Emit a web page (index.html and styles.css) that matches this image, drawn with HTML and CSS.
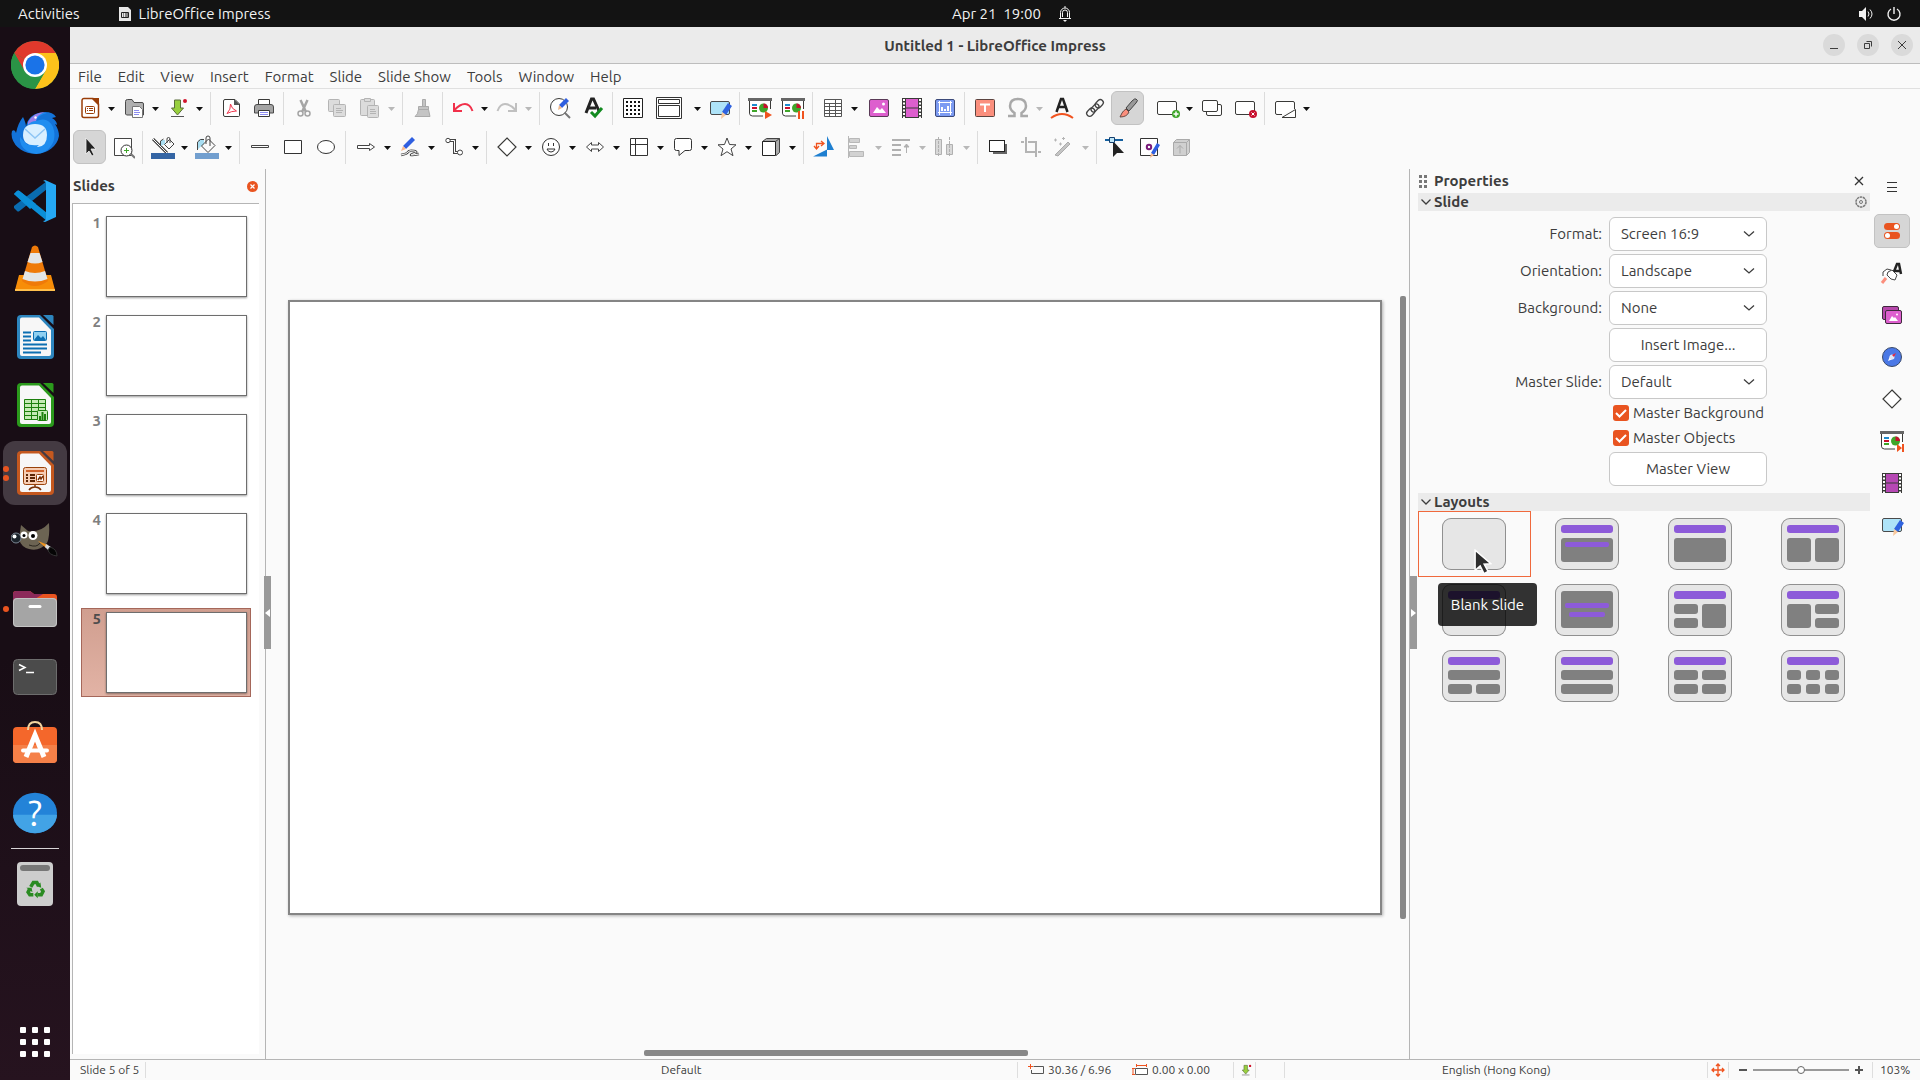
FILE: index.html
```
<!DOCTYPE html>
<html lang="en">
<head>
  <meta charset="UTF-8">
  <meta name="viewport" content="width=device-width, initial-scale=1.0">
  <title>Untitled 1 - LibreOffice Impress</title>
  <link rel="stylesheet" href="styles.css">
</head>
<body>

<!-- shared icons -->
<svg class="sprite" aria-hidden="true">
  <symbol id="caret" viewBox="0 0 7 4"><path d="M0 0h7L3.500 4z" fill="currentColor"/></symbol>
  <symbol id="chevron" viewBox="0 0 12 12"><path d="M1.500 3.500L6 8l4.500-4.500" fill="none" stroke="#3d3d3d" stroke-width="1.300"/></symbol>
  <symbol id="doc" viewBox="0 0 48 48">
    <path d="M10 2h19l14 14v26a4 4 0 0 1-4 4H10a4 4 0 0 1-4-4V6a4 4 0 0 1 4-4z" fill="currentColor"/>
    <path d="M11 4.500h17L40 17v24a2 2 0 0 1-2 2H11a2 2 0 0 1-2-2V6.500a2 2 0 0 1 2-2z" fill="#f7f7f7"/>
    <path d="M32 2h9a1.500 1.500 0 0 1 1.500 1.500V12z" fill="currentColor"/>
  </symbol>
  <symbol id="diamond" viewBox="0 0 24 24"><path d="M12 3l9 9-9 9-9-9z" fill="#fff" stroke="#3a3a38" stroke-width="1.200"/></symbol>
  <symbol id="show" viewBox="0 0 24 24">
    <path d="M1.500 5v12a3 3 0 0 0 3 3H15M22.500 5v8" fill="#fff" stroke="#3a3a38"/>
    <path d="M2 5h20v14H4.500A2.500 2.500 0 0 1 2 16z" fill="#fff"/>
    <path d="M0 2h24v3H0z" fill="#666"/>
    <path d="M4 8h5v2H4z" fill="#1e8bcd"/><path d="M4 11h5v2H4z" fill="#c8102e"/><path d="M4 14h5v2H4z" fill="#3fa62a"/>
    <circle cx="15.500" cy="12" r="4.500" fill="#3fa62a"/><path d="M15.500 12V7.500a4.500 4.500 0 0 1 4.500 4.500z" fill="#c8102e"/>
  </symbol>
  <symbol id="film" viewBox="0 0 24 24">
    <path d="M2 2h20v20H2z" fill="#3a3a38"/><path d="M6 3h12v8.500H6zM6 12.500h12V21H6z" fill="currentColor"/>
    <path d="M4 3v19M20 3v19" stroke="#fff" stroke-width="2" stroke-dasharray="2 1.500"/>
  </symbol>
  <symbol id="master-icon" viewBox="0 0 24 24">
    <rect x="2.500" y="5.500" width="19" height="13" rx="1.500" fill="#aee3f8" stroke="#4a4a4a"/>
    <path d="M20 7l4 3-6 9-4-3z" fill="#3063df"/><path d="M14 16l4 3-5 4z" fill="#f9c99d"/>
  </symbol>
  <symbol id="pic" viewBox="0 0 24 24">
    <rect x="2.500" y="3.500" width="19" height="17" rx="1.500" fill="#dd5fce" stroke="#5a3a57"/>
    <path d="M6 17l4-6 3 3 2-2 4 5z" fill="#fff"/><circle cx="16.500" cy="8" r="1.500" fill="#fff"/>
  </symbol>
  <symbol id="save" viewBox="0 0 24 24">
    <path d="M8.500 4h6v8h3L11.500 19l-6-7h3z" fill="#97cf3d" stroke="#5a6d3a"/><path d="M5 20.500h13" stroke="#555"/><circle cx="19" cy="5" r="2" fill="#d0142c"/>
  </symbol>
  <symbol id="pointer" viewBox="0 0 16 24">
    <path d="M1 1v18l4.500-4 3.500 7 3.500-2-3.500-6.500 6-.5z" fill="#2e2e2e" stroke="#fff" stroke-width="1.300"/>
  </symbol>
</svg>

<div class="desktop">

  <header class="topbar">
    <div class="topbar-left">
      <button class="activities">Activities</button>
      <button class="app-menu">
        <svg width="14" height="16" viewBox="0 0 14 16"><path d="M1 1h9l3 3v11H1z" fill="#e8e8e8"/><path d="M3.500 6.500h7v5h-7z" fill="none" stroke="#222"/><path d="M5 8h1M7 8h3M5 10h1M7 10h3" stroke="#222"/></svg>
        LibreOffice Impress
      </button>
    </div>
    <button class="clock">Apr 21&nbsp; 19:00
      <svg width="14" height="16" viewBox="0 0 14 16" fill="none" stroke="#f2f2f2"><path d="M1 12.500h12M2.500 12V6.500a4.500 4.500 0 0 1 9 0V12M4.500 11V6.500a2.500 2.500 0 0 1 5 0V11M7 0v2"/><path d="M5 14h4l-2 2z" fill="#f2f2f2" stroke="none"/></svg>
    </button>
    <button class="system" aria-label="System">
      <svg width="16" height="16" viewBox="0 0 16 16"><path d="M1 5h3l4-4v14l-4-4H1z" fill="#f2f2f2"/><path d="M10 5.500q2 2.500 0 5M12 3.500q4 4.500 0 9" fill="none" stroke="#f2f2f2"/></svg>
      <svg width="16" height="16" viewBox="0 0 16 16" fill="none" stroke="#f2f2f2" stroke-width="1.400"><path d="M8 1v7M5 3a6 6 0 1 0 6 0"/></svg>
    </button>
  </header>

  <nav class="dock" aria-label="Dock">
    <button aria-label="Google Chrome"><svg viewBox="0 0 48 48">
      <circle cx="24" cy="24" r="24" fill="#2a9446"/><path d="M24 24L3.200 12a24 24 0 0 1 41.600 0z" fill="#e0392c"/><path d="M24 24l10.400 6L24 48a24 24 0 0 0 20.800-36H24z" fill="#fcc21b"/><path d="M3.200 12L13.600 30 24 24z" fill="#e0392c"/><path d="M3.200 12a24 24 0 0 0 0 24A24 24 0 0 0 24 48l10.400-18A12 12 0 0 1 13.600 30z" fill="#2a9446"/><circle cx="24" cy="24" r="12" fill="#fff"/><circle cx="24" cy="24" r="9.600" fill="#1a73e8"/></svg></button>
    <button aria-label="Thunderbird"><svg viewBox="0 0 48 48">
      <g transform="translate(0 2)"><path d="M1 20q3-2 4 2Q7 12 12 6q3 6 3 10Q17 2 34 1q8 0 11 5l-4 1q5 3 5 7l-2-1q4 6 4 12a24 21 0 0 1-47 2Q0 23 1 20z" fill="#1373d9"/><path d="M17 11Q23 1 36 2q-9 2-11 8 12-5 17 6 5 15-7 24-10 6-19 0Q8 35 9 26q5 6 8 8z" fill="#1f8df0"/><path d="M17 11Q23 1 34 1q-9 3-9 9-5 0-8 4z" fill="#9d7fe8"/><circle cx="24.500" cy="6.500" r="1.200" fill="#fff"/><path d="M12 24q0-11 12-11t12 11-9 12q-2 0 1-2-16 2-16-10z" fill="#d9efff"/><path d="M14 18l10 9 10-9" fill="none" stroke="#8ec5f4" stroke-width="1.500"/></g></svg></button>
    <button aria-label="Visual Studio Code"><svg viewBox="0 0 48 48">
      <path d="M3 17l3-3q1-1 2.500 0L36 36v8z" fill="#0b8fd8"/><path d="M3 31l3 3q1 1 2.500 0L36 12V4L3 29z" fill="#0a6cb0"/><path d="M3 17l3-3q1-1 2.500 0L25 27l-6 5z" fill="#0b8fd8"/><path d="M34 3l11 5v32l-11 5q-1 0-2-1 3 0 3-3V7q0-3-3-3z" fill="#25a8f4"/></svg></button>
    <button aria-label="VLC"><svg viewBox="0 0 48 48">
      <path d="M8 30h32l4 15H4z" fill="#f78d08"/><path d="M4 44h40v2H4z" fill="#ffc04d"/><path d="M21 2q3-3 6 0l10 34q-13 10-26 0z" fill="#ef7a09"/><path d="M19.500 8h9l3 9q-7.500 3-15 0zM14 26q10 4 20 0l2.500 8q-12.500 5-25 0z" fill="#e3e5e6"/></svg></button>
    <button aria-label="LibreOffice Writer" class="c-writer"><svg viewBox="0 0 48 48"><use href="#doc"/>
      <path d="M12 19.500h8M12 23.500h8M12 27.500h8M12 31.500h24M12 35.500h24M12 39.500h18" stroke="#0c6fb2" stroke-width="2"/><rect x="22.500" y="18.500" width="13" height="9" rx="1" fill="#8fd0f1" stroke="#0c6fb2"/><path d="M23 27l4-5 3 3 2-2 3 4z" fill="#0c6fb2"/></svg></button>
    <button aria-label="LibreOffice Calc" class="c-calc"><svg viewBox="0 0 48 48"><use href="#doc"/>
      <path d="M13.500 18.500h21v20h-21zM13.500 22.500h21M13.500 26.500h21M13.500 30.500h21M13.500 34.500h21M20.500 18.500v20M27.500 18.500v20" fill="#c5eab5" stroke="#1c7f0c"/><rect x="26.500" y="29.500" width="10" height="10" rx="1" fill="#c5eab5" stroke="#1c7f0c"/><path d="M29 39v-4M31.500 39v-8M34 39v-6" stroke="#1c7f0c" stroke-width="2"/></svg></button>
    <button aria-label="LibreOffice Impress" class="c-impress active two"><svg viewBox="0 0 48 48"><use href="#doc"/>
      <rect x="12.500" y="18.500" width="23" height="17" rx="2" fill="#f6cdb3" stroke="#99420b"/><path d="M15 22h18" stroke="#d0622a" stroke-width="2"/><path d="M15 26h2M15 29h2M15 32h2M19 26h5M19 29h5M19 32h5" stroke="#5c2606" stroke-width="2"/><rect x="25.500" y="25.500" width="7" height="7" rx="1" fill="#fff" stroke="#99420b"/><path d="M27 31l2-3 1 2 2-3M24 36v2M18 41q2-3 6-3t6 3" fill="none" stroke="#7a3005" stroke-width="1.500"/></svg></button>
    <button aria-label="GIMP"><svg viewBox="0 0 48 48">
      <path d="M10 8l7 6q12 2 21-8 1 14-2 20-8 9-18 6Q10 30 8 22z" fill="#6c6453"/><circle cx="5" cy="21" r="5" fill="#1b222a" stroke="#7b8794"/><circle cx="3.500" cy="19.500" r="2" fill="#fff"/><circle cx="13" cy="18" r="3.500" fill="#fff"/><circle cx="22" cy="18.500" r="4.500" fill="#fff"/><circle cx="13" cy="18.500" r="1.500"/><circle cx="22" cy="19" r="2"/><path d="M18 28q8 3 11-2" stroke="#2a261f" fill="none"/><path d="M27 24l10 4-2 3z" fill="#ef9320"/><path d="M35 27l5 3-2 4-4-4z" fill="#d8dade"/><path d="M39 30q7 2 7 9-8-1-9-6z" fill="#050505" stroke="#333"/></svg></button>
    <button aria-label="Files" class="one"><svg viewBox="0 0 48 48">
      <g transform="translate(0 3)"><path d="M2 6a3 3 0 0 1 3-3h14l4 3h20a3 3 0 0 1 3 3v10H2z" fill="#e95420"/><path d="M2 6a3 3 0 0 1 3-3h14l4 3h9L16 16H2z" fill="#8c2a5a"/><rect x="2" y="10" width="44" height="29" rx="4" fill="#a5a5a5"/><rect x="2.500" y="10.500" width="43" height="28" rx="3.500" fill="none" stroke="#c4c4c4"/><path d="M19 18.500h10" stroke="#fff" stroke-width="3" stroke-linecap="round"/></g></svg></button>
    <button aria-label="Terminal"><svg viewBox="0 0 48 48">
      <rect x="2.500" y="6.500" width="43" height="35" rx="4" fill="#4b4b4b" stroke="#6d6d6d"/><path d="M8 11.500l6 3-6 3M15 19.500h8" fill="none" stroke="#fff" stroke-width="1.500"/></svg></button>
    <button aria-label="Ubuntu Software"><svg viewBox="0 0 48 48">
      <rect x="2" y="6" width="44" height="36" rx="4" fill="#f4672b"/><path d="M2 24h44v14a4 4 0 0 1-4 4H6a4 4 0 0 1-4-4z" fill="#f58048"/><path d="M17 9q0-8 7-8t7 8" fill="none" stroke="#f3d5a0" stroke-width="2"/><path d="M15 36l9-22 9 22" fill="none" stroke="#fff" stroke-width="5"/><path d="M12 29.500h24" stroke="#fff" stroke-width="4" stroke-linecap="round"/></svg></button>
    <button aria-label="Help" class="help"><svg viewBox="0 0 48 48"><ellipse cx="24" cy="24" rx="24" ry="22" fill="#2383d8"/><path d="M0 26h48a24 20 0 0 1-48 0z" fill="#42a3e6"/></svg><span>?</span></button>
    <hr>
    <button aria-label="Trash"><svg viewBox="0 0 48 48">
      <rect x="6" y="2" width="36" height="44" rx="4" fill="#cdcdcd"/><rect x="9" y="5" width="30" height="6" rx="3" fill="#777"/><g transform="translate(3 4) scale(.88)"><g fill="none" stroke="#2a8b22" stroke-width="4"><path d="M19 26l3-5h4l2 4M31 28l2 3-2 4h-4M22 35h-4l-2-3 2-4"/></g><path d="M30 21l1 6-6-2zM27 31v8l-4-4zM14 27l6 0 1 5z" fill="#2a8b22"/></g></svg></button>
    <button aria-label="Show Applications" class="apps"><i></i><i></i><i></i><i></i><i></i><i></i><i></i><i></i><i></i></button>
  </nav>

  <main class="window">
    <div class="titlebar">
      <h1>Untitled 1 - LibreOffice Impress</h1>
      <div class="win-buttons">
        <button aria-label="Minimize"><svg viewBox="0 0 22 22"><path d="M7 14.500h8"/></svg></button>
        <button aria-label="Restore"><svg viewBox="0 0 22 22"><path d="M7.500 9.500h5v5h-5zM9.500 7.500h5v5"/></svg></button>
        <button aria-label="Close"><svg viewBox="0 0 22 22"><path d="M7 7l8 8M15 7l-8 8"/></svg></button>
      </div>
    </div>

    <nav class="menubar">
      <button>File</button><button>Edit</button><button>View</button><button>Insert</button><button>Format</button><button>Slide</button><button>Slide Show</button><button>Tools</button><button>Window</button><button>Help</button>
    </nav>

    <div class="toolbars">
    <!-- standard toolbar -->
    <div class="toolbar">
      <button class="tb" aria-label="New"><svg viewBox="0 0 24 24"><path d="M6 2.500h9l5.500 5.500v11.500a2 2 0 0 1-2 2H6a2 2 0 0 1-2-2v-15a2 2 0 0 1 2-2z" fill="#fff" stroke="#9a3e08" stroke-width="1.500"/><path d="M13 2h8v8z" fill="#9a3e08"/><rect x="7.500" y="10.500" width="9" height="7" rx="1" fill="none" stroke="#9a3e08"/><path d="M9 12.500h1M11 12.500h4M9 14.500h1M11 14.500h4" stroke="#9a3e08"/></svg></button>
      <button class="arrow" aria-label="New options"><svg><use href="#caret"/></svg></button>
      <button class="tb" aria-label="Open"><svg viewBox="0 0 24 24"><path d="M3.500 18V5.500a2 2 0 0 1 2-2H10l2 3h8a1.500 1.500 0 0 1 1.500 1.500V19h-17z" fill="#b0b0b0" stroke="#4a4a4a"/><path d="M10.500 10.500h7l3 3v8h-10z" fill="#fff" stroke="#777"/><path d="M12 14.500h5M12 16.500h6M12 18.500h5" stroke="#8d8df0"/></svg></button>
      <button class="arrow" aria-label="Open options"><svg><use href="#caret"/></svg></button>
      <button class="tb" aria-label="Save"><svg><use href="#save"/></svg></button>
      <button class="arrow" aria-label="Save options"><svg><use href="#caret"/></svg></button>
      <span class="sep"></span>
      <button class="tb" aria-label="Export as PDF"><svg viewBox="0 0 24 24"><path d="M6 3.500h10l4.500 4.500v11.500a1 1 0 0 1-1 1H6a1.500 1.500 0 0 1-1.500-1.500V5A1.500 1.500 0 0 1 6 3.500z" fill="#fff" stroke="#3a3a38"/><path d="M15 3l6 6h-6z" fill="#555"/><path d="M11.500 8q1 5 6 7-5 0-9.500 2.500 4-4 3.500-9.500z" fill="none" stroke="#f0384f"/></svg></button>
      <button class="tb" aria-label="Print"><svg viewBox="0 0 24 24"><path d="M6.500 8V3.500h11V8" fill="#fff" stroke="#3a3a38"/><path d="M5 8.500h14a2.500 2.500 0 0 1 2.500 2.500v6h-19v-6A2.500 2.500 0 0 1 5 8.500z" fill="#a4a4a4" stroke="#4a4a4a"/><path d="M6.500 14.500h11v6h-11z" fill="#fff" stroke="#3a3a38"/><path d="M8 16.500h8M8 18.500h8" stroke="#8d8df0"/></svg></button>
      <span class="sep"></span>
      <button class="tb" aria-label="Cut" disabled><svg viewBox="0 0 24 24" fill="none" stroke="#a5a5a5" stroke-width="1.500"><path d="M8.500 4l5.500 12M15.500 4L10 16" stroke-width="2.500"/><circle cx="8.500" cy="17.500" r="2.500"/><circle cx="15.500" cy="17.500" r="2.500"/></svg></button>
      <button class="tb" aria-label="Copy" disabled><svg viewBox="0 0 24 24" fill="#dcdcdc" stroke="#b4b4b4"><rect x="3.500" y="3.500" width="11" height="12" rx="1"/><rect x="8.500" y="8.500" width="12" height="12" rx="1"/><path d="M11 12.500h5M11 14.500h7M11 16.500h6"/></svg></button>
      <button class="tb" aria-label="Paste" disabled><svg viewBox="0 0 24 24" fill="#dcdcdc" stroke="#b4b4b4"><rect x="2.500" y="3.500" width="14" height="16" rx="1"/><path d="M6.500 2.500h6v3h-6z"/><rect x="9.500" y="9.500" width="11" height="12" rx="1"/><path d="M12 13.500h5M12 15.500h6M12 17.500h6"/></svg></button>
      <button class="arrow" aria-label="Paste options" disabled><svg><use href="#caret"/></svg></button>
      <span class="sep"></span>
      <button class="tb" aria-label="Clone Formatting" disabled><svg viewBox="0 0 24 24" fill="#c4c4c4" stroke="#aaa"><path d="M11.500 3.500h3v7h-3zM7.500 10.500h10v3h-10zM7.500 13.500h10l1.500 7H4q3-2 3.500-7z"/></svg></button>
      <span class="sep"></span>
      <button class="tb" aria-label="Undo"><svg viewBox="0 0 24 24" fill="none" stroke="#f1304a" stroke-width="2"><path d="M3 7v8h8M3.500 14Q9 8 14 8t7.500 7"/></svg></button>
      <button class="arrow" aria-label="Undo options"><svg><use href="#caret"/></svg></button>
      <button class="tb" aria-label="Redo" disabled><svg viewBox="0 0 24 24" fill="none" stroke="#c0c0c0" stroke-width="2"><path d="M21 7v8h-8M20.500 14Q15 8 10 8t-7.500 7"/></svg></button>
      <button class="arrow" aria-label="Redo options" disabled><svg><use href="#caret"/></svg></button>
      <span class="sep"></span>
      <button class="tb" aria-label="Find and Replace"><svg viewBox="0 0 24 24"><circle cx="11" cy="11" r="8.500" fill="#fff" stroke="#3a3a38"/><path d="M16.500 16.500L22 22" stroke="#777" stroke-width="2"/><path d="M18 2l3 3-7 7-3-3z" fill="#2f5fe0"/><path d="M11 9l3 3-4 2z" fill="#f0b98d"/></svg></button>
      <button class="tb" aria-label="Spelling"><svg viewBox="0 0 24 24"><path d="M5 17L10.500 3h2L18 15M7 12h8" fill="none" stroke="#222" stroke-width="3"/><path d="M10 16l4 4 7-8" fill="none" stroke="#118a1f" stroke-width="3"/></svg></button>
      <span class="sep"></span>
      <button class="tb" aria-label="Display Grid"><svg viewBox="0 0 24 24"><path d="M2.500 2.500h19v19h-19z" fill="#fff" stroke="#222"/><path d="M5 6h15M5 10h15M5 14h15M5 18h15" stroke="#111" stroke-width="2" stroke-dasharray="2 2"/></svg></button>
      <button class="tb wide" aria-label="Display Views"><svg viewBox="0 0 28 24" fill="#fff" stroke="#333"><path d="M1.500 1.500h25v21h-25zM3.500 3.500h21v4h-21zM3.500 9.500h21v11h-21z"/></svg></button>
      <button class="arrow" aria-label="Display Views options"><svg><use href="#caret"/></svg></button>
      <button class="tb" aria-label="Master Slide"><svg><use href="#master-icon"/></svg></button>
      <span class="sep"></span>
      <button class="tb" aria-label="Start from First Slide"><svg viewBox="0 0 24 24"><use href="#show"/><path d="M17 15l7 4-7 4z" fill="#f0531f"/></svg></button>
      <button class="tb" aria-label="Start from Current Slide"><svg viewBox="0 0 24 24"><use href="#show"/><path d="M17 15h2v8h-2zM21 15h2v8h-2z" fill="#f0531f"/></svg></button>
      <span class="sep"></span>
      <button class="tb" aria-label="Table"><svg viewBox="0 0 24 24"><path d="M3.500 3.500h17v17h-17zM3.500 7.500h17M3.500 10.500h17M3.500 14.500h17M3.500 17.500h17M8.500 7v13M14.500 3v17" fill="#fff" stroke="#555"/></svg></button>
      <button class="arrow" aria-label="Table options"><svg><use href="#caret"/></svg></button>
      <span class="gap"></span>
      <button class="tb" aria-label="Insert Image"><svg><use href="#pic"/></svg></button>
      <button class="tb c-film" aria-label="Insert Media"><svg><use href="#film"/></svg></button>
      <button class="tb" aria-label="Insert Chart"><svg viewBox="0 0 24 24"><rect x="2.500" y="3.500" width="19" height="17" rx="1.500" fill="#7c9bf2" stroke="#3c4a7a"/><path d="M6.500 5v14M5 16.500h14M17.500 5v14M5 6.500h14" stroke="#fff"/><path d="M8 15v-4h2v4zM11 15v-2h2v2zM14 15v-5h2v5z" fill="#fff"/></svg></button>
      <span class="sep"></span>
      <button class="tb" aria-label="Insert Text Box"><svg viewBox="0 0 24 24"><rect x="2.500" y="3.500" width="19" height="17" rx="1" fill="#fb8f7d" stroke="#5c4440"/><path d="M7 8.500h10M12 8v8" stroke="#fff" stroke-width="2"/></svg></button>
      <button class="tb" aria-label="Special Character" disabled><svg viewBox="0 0 24 24"><path d="M2 20h6.500v-3Q4 14 4 10q0-7 8-7t8 7q0 4-4.500 7v3H22" fill="none" stroke="#a9a9a9" stroke-width="2.500"/></svg></button>
      <button class="arrow" aria-label="Special Character options" disabled><svg><use href="#caret"/></svg></button>
      <button class="tb" aria-label="Fontwork"><svg viewBox="0 0 24 24"><path d="M6.500 16L11 3h2l4.500 13M8 11h8" fill="none" stroke="#222" stroke-width="2.500"/><path d="M1 22q11-8 22 0" fill="none" stroke="#f0531f" stroke-width="2"/></svg></button>
      <button class="tb" aria-label="Hyperlink"><svg viewBox="0 0 24 24" fill="none" stroke="#444" stroke-width="1.300"><g transform="rotate(-45 12 12)"><rect x="1.500" y="9" width="9" height="6" rx="3"/><rect x="13.500" y="9" width="9" height="6" rx="3"/><rect x="7.500" y="9.500" width="9" height="5" rx="2.500"/></g></svg></button>
      <button class="tb pressed" aria-label="Show Draw Functions"><svg viewBox="0 0 24 24"><path d="M20 3q3 1 0 4l-7 8-3-3 6-7q3-3 4-2z" fill="#999" stroke="#444"/><path d="M10 13l3 3q-2 5-9 5 1-2 2-4t4-4z" fill="#fb8f7d" stroke="#6a4a44"/></svg></button>
      <span class="sep blank"></span>
      <button class="tb" aria-label="New Slide"><svg viewBox="0 0 24 24"><rect x="1.500" y="5.500" width="19" height="13" rx="1.500" fill="#fff" stroke="#3a3a38"/><circle cx="20" cy="18" r="4" fill="#3fa62a"/><path d="M17.500 18h5M20 15.500v5" stroke="#fff" stroke-width="1.500"/></svg></button>
      <button class="arrow" aria-label="New Slide options"><svg><use href="#caret"/></svg></button>
      <button class="tb" aria-label="Duplicate Slide"><svg viewBox="0 0 24 24" fill="#fff" stroke="#3a3a38"><rect x="6.500" y="8.500" width="15" height="11" rx="1.500"/><rect x="2.500" y="4.500" width="15" height="11" rx="1.500"/></svg></button>
      <button class="tb" aria-label="Delete Slide"><svg viewBox="0 0 24 24"><rect x="2.500" y="5.500" width="19" height="13" rx="1.500" fill="#fff" stroke="#3a3a38"/><circle cx="20" cy="18" r="4" fill="#c8102e"/><path d="M18.500 16.500l3 3M21.500 16.500l-3 3" stroke="#fff"/></svg></button>
      <span class="sep"></span>
      <button class="tb" aria-label="Slide Layout"><svg viewBox="0 0 24 24"><path d="M21.500 13V7a1.500 1.500 0 0 0-1.500-1.500H4A1.500 1.500 0 0 0 2.500 7v10A1.500 1.500 0 0 0 4 18.500h5M9 21.500l13.500-8v8z" fill="#fff" stroke="#3a3a38"/></svg></button>
      <button class="arrow" aria-label="Slide Layout options"><svg><use href="#caret"/></svg></button>
    </div>

    <!-- drawing toolbar -->
    <div class="toolbar">
      <button class="tb pressed" aria-label="Select"><svg viewBox="0 0 24 24"><path d="M8 3v16l3-3 3 5 2-1-3-6h5z" fill="#222" stroke="#f2f2f2" stroke-width=".8"/></svg></button>
      <button class="tb" aria-label="Zoom and Pan"><svg viewBox="0 0 24 24"><path d="M3.500 3.500h17v17h-17z" fill="#fff" stroke="#444"/><circle cx="15.500" cy="15.500" r="5.500" fill="#fff" stroke="#333"/><path d="M20 19l4 4" stroke="#777" stroke-width="2"/><path d="M13 15.500h5M15.500 13v5" stroke="#3fa62a"/></svg></button>
      <span class="sep"></span>
      <button class="tb" aria-label="Line Color"><svg viewBox="0 0 24 24"><path d="M2 4l14 14" stroke="#444" stroke-width="3"/><path d="M2 4l14 14" stroke="#fff"/><path d="M10 11V5h4v4z" fill="#a8def2"/><path d="M13.500 9.500l5-5 4.500 4.500-5 5zM16 8V4a1.500 1.500 0 0 1 3 0v4M9.500 11V6l3-2" fill="none" stroke="#444"/><path d="M0 18h24v6H0z" fill="#3465a4"/></svg></button>
      <button class="arrow" aria-label="Line Color options"><svg><use href="#caret"/></svg></button>
      <button class="tb" aria-label="Fill Color"><svg viewBox="0 0 24 24"><path d="M3 14V7q1-4 6-3v5z" fill="#a8def2"/><path d="M6.500 11l7-7 6.500 6.500-7 7zM11 9V3a2 2 0 0 1 4 0v8M2.500 15V7l3-2.500H9" fill="none" stroke="#444"/><path d="M0 18h24v6H0z" fill="#729fcf"/></svg></button>
      <button class="arrow" aria-label="Fill Color options"><svg><use href="#caret"/></svg></button>
      <span class="sep"></span>
      <button class="tb" aria-label="Line"><svg viewBox="0 0 24 24"><path d="M3.500 10.500h17v2h-17z" fill="#fff" stroke="#444"/></svg></button>
      <button class="tb" aria-label="Rectangle"><svg viewBox="0 0 24 24"><path d="M3.500 5.500h17v13h-17z" fill="#fff" stroke="#333"/></svg></button>
      <button class="tb" aria-label="Ellipse"><svg viewBox="0 0 24 24"><ellipse cx="12" cy="12" rx="8.500" ry="6.500" fill="#fff" stroke="#333"/></svg></button>
      <span class="sep"></span>
      <button class="tb" aria-label="Lines and Arrows"><svg viewBox="0 0 24 24"><path d="M3.500 10.500h12v-2l5 3.500-5 3.500v-2h-12z" fill="#fff" stroke="#444"/></svg></button>
      <button class="arrow" aria-label="Lines and Arrows options"><svg><use href="#caret"/></svg></button>
      <button class="tb" aria-label="Curves and Polygons"><svg viewBox="0 0 24 24"><path d="M3 20q6-1 7-3t6-1-1 3 6 0" fill="none" stroke="#444" stroke-width="2.500"/><path d="M3 20q6-1 7-3t6-1-1 3 6 0" fill="none" stroke="#fff"/><path d="M14 2l3 3-9 9-3-3z" fill="#2f5fe0"/><path d="M5 11l3 3-5 2z" fill="#f9b98d"/></svg></button>
      <button class="arrow" aria-label="Curves options"><svg><use href="#caret"/></svg></button>
      <button class="tb" aria-label="Connectors"><svg viewBox="0 0 24 24" fill="#fff" stroke="#444"><path d="M7 5.500h5.500v12H17" fill="none" stroke-width="3"/><path d="M7 5.500h5.500v12H17" fill="none" stroke="#fff"/><circle cx="6" cy="5.500" r="2.200"/><circle cx="18" cy="17.500" r="2.500"/></svg></button>
      <button class="arrow" aria-label="Connectors options"><svg><use href="#caret"/></svg></button>
      <span class="sep"></span>
      <button class="tb" aria-label="Basic Shapes"><svg><use href="#diamond"/></svg></button>
      <button class="arrow" aria-label="Basic Shapes options"><svg><use href="#caret"/></svg></button>
      <button class="tb" aria-label="Symbol Shapes"><svg viewBox="0 0 24 24" fill="#fff" stroke="#333"><circle cx="12" cy="12" r="8.500"/><path d="M8 14h8q-1 3-4 3t-4-3z"/><path d="M9.500 8v3M14.500 8v3"/></svg></button>
      <button class="arrow" aria-label="Symbol Shapes options"><svg><use href="#caret"/></svg></button>
      <button class="tb" aria-label="Block Arrows"><svg viewBox="0 0 24 24"><path d="M3.500 12l5-4.500v2.500h7V7.500l5 4.500-5 4.500V14h-7v2.500z" fill="#fff" stroke="#444"/></svg></button>
      <button class="arrow" aria-label="Block Arrows options"><svg><use href="#caret"/></svg></button>
      <button class="tb" aria-label="Flowchart"><svg viewBox="0 0 24 24"><path d="M3.500 3.500h17v17h-17zM3.500 9.500h17M8.500 3v17" fill="#fff" stroke="#333"/></svg></button>
      <button class="arrow" aria-label="Flowchart options"><svg><use href="#caret"/></svg></button>
      <button class="tb" aria-label="Callout Shapes"><svg viewBox="0 0 24 24"><path d="M5.500 3.500h13a2 2 0 0 1 2 2v8a2 2 0 0 1-2 2H14l-6 5v-5H5.500a2 2 0 0 1-2-2v-8a2 2 0 0 1 2-2z" fill="#fff" stroke="#333"/></svg></button>
      <button class="arrow" aria-label="Callout options"><svg><use href="#caret"/></svg></button>
      <button class="tb" aria-label="Stars and Banners"><svg viewBox="0 0 24 24"><path d="M12 3l2.500 6.500 6.500.3-5 4.200 2 6.700-6-4-6 4 2-6.700-5-4.200 6.500-.3z" fill="#fff" stroke="#444"/></svg></button>
      <button class="arrow" aria-label="Stars options"><svg><use href="#caret"/></svg></button>
      <button class="tb" aria-label="3D Objects"><svg viewBox="0 0 24 24"><path d="M3.500 6.500l4-3h13v14l-3.500 3z" fill="#aaa" stroke="#444"/><path d="M3.500 6.500h13v14h-13z" fill="#fff" stroke="#222"/><path d="M16.500 6.500l4-3" stroke="#444"/></svg></button>
      <button class="arrow" aria-label="3D Objects options"><svg><use href="#caret"/></svg></button>
      <span class="sep"></span>
      <button class="tb" aria-label="Rotate"><svg viewBox="0 0 24 24"><path d="M15 1v14h7zM1 21.500h14v-7z" fill="#1e7fd0"/><path d="M4.500 13V8.500H11M9 6l3 2.500-3 2.500M2 11l2.500 3L7 11" fill="none" stroke="#f0531f" stroke-width="1.300"/></svg></button>
      <button class="tb" aria-label="Align Objects" disabled><svg viewBox="0 0 24 24" fill="#d2d2d2" stroke="#b8b8b8"><path d="M3.500 1v22M4.500 3.500h10v4h-10zM4.500 10.500h7v3h-7zM4.500 16.500h14v5h-14z"/></svg></button>
      <button class="arrow" aria-label="Align options" disabled><svg><use href="#caret"/></svg></button>
      <button class="tb" aria-label="Arrange" disabled><svg viewBox="0 0 24 24" stroke="#b0b0b0" fill="#b0b0b0" stroke-width="2"><path d="M3 5h18M3 10h9M3 15h9M3 20h9"/><path d="M17.500 9v9M15 12l2.500-3 2.500 3z" stroke-width="1"/></svg></button>
      <button class="arrow" aria-label="Arrange options" disabled><svg><use href="#caret"/></svg></button>
      <button class="tb" aria-label="Distribute" disabled><svg viewBox="0 0 24 24" fill="#d8d8d8" stroke="#b0b0b0"><path d="M2.500 4.500h6v15h-6zM13.500 9.500h6v10h-6z"/><path d="M5.500 2v20M16.500 2v20" stroke-dasharray="3 1"/></svg></button>
      <button class="arrow" aria-label="Distribute options" disabled><svg><use href="#caret"/></svg></button>
      <span class="sep"></span>
      <button class="tb" aria-label="Shadow"><svg viewBox="0 0 24 24"><path d="M7 9h14v10H7z" fill="#666"/><rect x="3.500" y="5.500" width="15" height="11" fill="#fff" stroke="#222"/></svg></button>
      <button class="tb" aria-label="Crop Image" disabled><svg viewBox="0 0 24 24" fill="none" stroke="#b4b4b4" stroke-width="2"><path d="M7 2v15h10M9 7h8v15M2 7h3M19 17h3"/></svg></button>
      <button class="tb" aria-label="Filter" disabled><svg viewBox="0 0 24 24"><path d="M3 20L16 7l2 2L6 21z" fill="#c4c4c4" stroke="#aaa"/><path d="M2 5h3M3.500 3.500v3M7 9h3M8.500 7.500v3M10 3.500h3M11.500 2v3" stroke="#b4b4b4"/></svg></button>
      <button class="arrow" aria-label="Filter options" disabled><svg><use href="#caret"/></svg></button>
      <span class="sep"></span>
      <button class="tb" aria-label="Points"><svg viewBox="0 0 24 24"><path d="M0 5h18" stroke="#15609f" stroke-width="2"/><path d="M8 6v16l4-4h7z" fill="#222"/><path d="M4.500 2.500h5v5h-5z" fill="#bfe6f7" stroke="#15406f"/></svg></button>
      <button class="tb" aria-label="Glue Points"><svg viewBox="0 0 24 24"><path d="M2.500 3.500h17v17h-17z" fill="#fff" stroke="#333"/><circle cx="11" cy="12" r="2.200" fill="none" stroke="#7b1b7b" stroke-width="2"/><path d="M19 8l3 2-6 10-3-2z" fill="#2f5fe0"/><path d="M13 18l3 2-4 3z" fill="#f9b98d"/></svg></button>
      <button class="tb" aria-label="Toggle Extrusion" disabled><svg viewBox="0 0 24 24" fill="#d0d0d0" stroke="#aaa"><path d="M2.500 7.500l3-3h13v13l-3 3h-13zM2.500 7.500h13v13M15.500 7.500l3-3"/><path d="M9 18.500v-8M6 13.500l3-3 3 3" fill="none"/></svg></button>
    </div>
    </div>

    <div class="work">
      <aside class="slides-panel">
        <div class="panel-head">
          <h2>Slides</h2>
          <button aria-label="Close slide pane"><svg viewBox="0 0 11 11"><circle cx="5.500" cy="5.500" r="5.500" fill="#e95420"/><path d="M3.500 3.500l4 4M7.500 3.500l-4 4" stroke="#fff" stroke-width="1.200"/></svg></button>
        </div>
        <ol class="slide-list">
          <li><span>1</span><button aria-label="Slide 1"></button></li>
          <li><span>2</span><button aria-label="Slide 2"></button></li>
          <li><span>3</span><button aria-label="Slide 3"></button></li>
          <li><span>4</span><button aria-label="Slide 4"></button></li>
          <li class="current"><span>5</span><button aria-label="Slide 5"></button></li>
        </ol>
        <button class="handle" aria-label="Hide slide pane"><svg viewBox="0 0 5 8"><path d="M5 0v8L0 4z" fill="#fff"/></svg></button>
      </aside>

      <section class="editor">
        <div class="stage"><div class="slide"></div></div>
        <div class="scroll-y"><div></div></div>
        <div class="scroll-x"><div></div></div>
      </section>

      <aside class="sidebar">
        <button class="handle" aria-label="Hide sidebar"><svg viewBox="0 0 5 8"><path d="M0 0v8l5-4z" fill="#fff"/></svg></button>
        <div class="deck">
          <div class="deck-head">
            <svg class="grip" viewBox="0 0 8 13" fill="#777"><path d="M0 0h3v3H0zM5 0h3v3H5zM0 5h3v3H0zM5 5h3v3H5zM0 10h3v3H0zM5 10h3v3H5z"/></svg>
            <h2>Properties</h2>
            <button aria-label="Close Sidebar Deck"><svg viewBox="0 0 10 10"><path d="M1 1l8 8M9 1L1 9" stroke="#333" stroke-width="1.300"/></svg></button>
          </div>
          <div class="section-head">
            <svg><use href="#chevron"/></svg>
            <h3>Slide</h3>
            <button aria-label="More Options"><svg viewBox="0 0 12 12" fill="none" stroke="#777"><circle cx="6" cy="6" r="5" stroke-width="1.500" stroke-dasharray="2.500 .6"/><circle cx="6" cy="6" r="1.500"/></svg></button>
          </div>
          <form class="props">
            <label for="format">Format:</label>
            <select id="format"><option>Screen 16:9</option></select>
            <label for="orientation">Orientation:</label>
            <select id="orientation"><option>Landscape</option></select>
            <label for="background">Background:</label>
            <select id="background"><option>None</option></select>
            <button type="button">Insert Image...</button>
            <label for="master">Master Slide:</label>
            <select id="master"><option>Default</option></select>
            <label class="check"><input type="checkbox" checked>Master Background</label>
            <label class="check"><input type="checkbox" checked>Master Objects</label>
            <button type="button">Master View</button>
          </form>
          <div class="section-head">
            <svg><use href="#chevron"/></svg>
            <h3>Layouts</h3>
          </div>
          <div class="layouts">
            <div class="layout-cell selected">
              <button aria-label="Blank Slide"></button>
              <svg class="cursor"><use href="#pointer"/></svg>
              <div class="tooltip" role="tooltip">Blank Slide</div>
            </div>
            <div class="layout-cell"><button aria-label="Title Slide"><svg viewBox="0 0 64 52"><rect class="t" x="6" y="7" width="52" height="8" rx="3"/><rect x="6" y="20" width="52" height="24" rx="3"/><rect class="t" x="10" y="24" width="44" height="5" rx="2"/></svg></button></div>
            <div class="layout-cell"><button aria-label="Title, Content"><svg viewBox="0 0 64 52"><rect class="t" x="6" y="7" width="52" height="8" rx="3"/><rect x="6" y="20" width="52" height="24" rx="3"/></svg></button></div>
            <div class="layout-cell"><button aria-label="Title and 2 Content"><svg viewBox="0 0 64 52"><rect class="t" x="6" y="7" width="52" height="8" rx="3"/><rect x="6" y="20" width="24" height="24" rx="3"/><rect x="34" y="20" width="24" height="24" rx="3"/></svg></button></div>
            <div class="layout-cell"><button aria-label="Title Only"><svg viewBox="0 0 64 52"><rect class="t" x="6" y="7" width="52" height="8" rx="3"/></svg></button></div>
            <div class="layout-cell"><button aria-label="Centered Text"><svg viewBox="0 0 64 52"><rect x="6" y="7" width="52" height="37" rx="3"/><rect class="t" x="10" y="19" width="44" height="5" rx="2"/><rect class="t" x="14" y="28" width="36" height="5" rx="2"/></svg></button></div>
            <div class="layout-cell"><button aria-label="Title, 2 Content and Content"><svg viewBox="0 0 64 52"><rect class="t" x="6" y="7" width="52" height="8" rx="3"/><rect x="6" y="20" width="24" height="10" rx="3"/><rect x="6" y="34" width="24" height="10" rx="3"/><rect x="34" y="20" width="24" height="24" rx="3"/></svg></button></div>
            <div class="layout-cell"><button aria-label="Title, Content and 2 Content"><svg viewBox="0 0 64 52"><rect class="t" x="6" y="7" width="52" height="8" rx="3"/><rect x="6" y="20" width="24" height="24" rx="3"/><rect x="34" y="20" width="24" height="10" rx="3"/><rect x="34" y="34" width="24" height="10" rx="3"/></svg></button></div>
            <div class="layout-cell"><button aria-label="Title, Content over 2 Content"><svg viewBox="0 0 64 52"><rect class="t" x="6" y="7" width="52" height="8" rx="3"/><rect x="6" y="20" width="52" height="10" rx="3"/><rect x="6" y="34" width="24" height="10" rx="3"/><rect x="34" y="34" width="24" height="10" rx="3"/></svg></button></div>
            <div class="layout-cell"><button aria-label="Title, Content over Content"><svg viewBox="0 0 64 52"><rect class="t" x="6" y="7" width="52" height="8" rx="3"/><rect x="6" y="20" width="52" height="10" rx="3"/><rect x="6" y="34" width="52" height="10" rx="3"/></svg></button></div>
            <div class="layout-cell"><button aria-label="Title, 4 Content"><svg viewBox="0 0 64 52"><rect class="t" x="6" y="7" width="52" height="8" rx="3"/><rect x="6" y="20" width="24" height="10" rx="3"/><rect x="34" y="20" width="24" height="10" rx="3"/><rect x="6" y="34" width="24" height="10" rx="3"/><rect x="34" y="34" width="24" height="10" rx="3"/></svg></button></div>
            <div class="layout-cell"><button aria-label="Title, 6 Content"><svg viewBox="0 0 64 52"><rect class="t" x="6" y="7" width="52" height="8" rx="3"/><rect x="6" y="20" width="14" height="10" rx="3"/><rect x="25" y="20" width="14" height="10" rx="3"/><rect x="44" y="20" width="14" height="10" rx="3"/><rect x="6" y="34" width="14" height="10" rx="3"/><rect x="25" y="34" width="14" height="10" rx="3"/><rect x="44" y="34" width="14" height="10" rx="3"/></svg></button></div>
          </div>
        </div>

        <div class="tabs">
          <button class="tab-menu" aria-label="Sidebar Settings"><svg viewBox="0 0 24 24"><path d="M7 7.500h10M7 12.500h10M7 16.500h10" stroke="#333"/></svg></button>
          <button class="pressed" aria-label="Properties"><svg viewBox="0 0 24 24"><rect x="4" y="4" width="16" height="7" rx="3.500" fill="#e95420"/><rect x="4" y="13" width="16" height="7" rx="3.500" fill="#e95420"/><circle cx="16.500" cy="7.500" r="2.500" fill="#fff"/><circle cx="7.500" cy="16.500" r="2.500" fill="#fff"/></svg></button>
          <button aria-label="Styles"><svg viewBox="0 0 24 24"><path d="M13 13l4-10h2l2 10M14 10h6" fill="none" stroke="#222" stroke-width="2.500"/><path d="M8 11l4-2 5 5-2 5-4-1-4-4zM3 15v-4l4-3 4 1" fill="#fff" stroke="#444"/><path d="M6 17l-4 5" stroke="#fb8f7d" stroke-width="3"/></svg></button>
          <button aria-label="Gallery"><svg viewBox="0 0 24 24"><rect x="2.500" y="3.500" width="16" height="13" rx="1.500" fill="#b648ab" stroke="#3f2a3d"/><rect x="5.500" y="7.500" width="16" height="13" rx="1.500" fill="#dd5fce" stroke="#3f2a3d"/><path d="M9 18l3-5 2 2 1-1 3 4z" fill="#fff"/><circle cx="17" cy="11.500" r="1" fill="#fff"/></svg></button>
          <button aria-label="Navigator"><svg viewBox="0 0 24 24"><circle cx="12" cy="12" r="9.500" fill="#4a78e6" stroke="#3a4a6a"/><path d="M8 16l2-5 3 3z" fill="#fff"/><circle cx="12" cy="12" r="2.500" fill="#dfe6f7"/><path d="M16 8l-4 2 2 2z" fill="#e8283c"/></svg></button>
          <button aria-label="Shapes"><svg><use href="#diamond"/></svg></button>
          <button aria-label="Slide Transition"><svg viewBox="0 0 24 24"><use href="#show"/><path d="M17 15l5 4-5 4zM22 15h2v8h-2z" fill="#f0531f"/></svg></button>
          <button class="c-anim" aria-label="Animation"><svg><use href="#film"/></svg></button>
          <button aria-label="Master Slides"><svg><use href="#master-icon"/></svg></button>
        </div>
      </aside>
    </div>

    <footer class="statusbar">
      <span class="st-slide">Slide 5 of 5</span>
      <span class="st-master">Default</span>
      <span class="st-pos"><svg viewBox="0 0 16 12"><path d="M5.500 2.500h10v7h-12V6" fill="none" stroke="#555"/><path d="M2.500 0v5M0 2.500h5" stroke="#f0531f"/></svg>30.36 / 6.96</span>
      <span class="st-size"><svg viewBox="0 0 16 12"><path d="M3.500 4.500h12v6h-12z" fill="#fff" stroke="#555"/><path d="M4 1.500h11M4.500 0v3M14.500 0v3M1 4v7M0 4.500h3M0 10.500h3" stroke="#f0531f"/></svg>0.00 x 0.00</span>
      <span class="st-save"><svg><use href="#save"/></svg></span>
      <span class="st-sign"></span>
      <span class="st-lang">English (Hong Kong)</span>
      <button class="st-fit" aria-label="Fit slide"><svg viewBox="0 0 14 14"><path d="M7 1v12M1 7h12M5 3l2-2 2 2M5 11l2 2 2-2M3 5L1 7l2 2M11 5l2 2-2 2" fill="none" stroke="#f0531f" stroke-width="1.300"/></svg></button>
      <div class="st-zoom">
        <button aria-label="Zoom out"><svg viewBox="0 0 8 8"><path d="M0 4h8" stroke="#555" stroke-width="2"/></svg></button>
        <input type="range" min="0" max="100" value="50" aria-label="Zoom">
        <button aria-label="Zoom in"><svg viewBox="0 0 8 8"><path d="M0 4h8M4 0v8" stroke="#555" stroke-width="2"/></svg></button>
      </div>
      <span class="st-percent">103%</span>
    </footer>
  </main>
</div>

</body>
</html>
```
FILE: styles.css
```
* {
  box-sizing: border-box;
}

body {
  margin: 0;
  font-family: "Ubuntu", "Noto Sans", sans-serif;
  font-size: 15px;
  line-height: 18px;
  color: #3d3d3d;
  background: #fafafa;
}

button,
select,
input {
  font: inherit;
  color: inherit;
}

button {
  padding: 0;
  border: none;
  background: none;
}

h1,
h2,
h3 {
  margin: 0;
  font-size: 15px;
  font-weight: 700;
}

svg {
  display: block;
  flex: none;
}

.sprite {
  position: absolute;
  width: 0;
  height: 0;
}

.desktop {
  display: grid;
  grid-template: 27px minmax(0, 1fr) / 70px minmax(0, 1fr);
  height: 100vh;
}

/* top bar */
.topbar {
  grid-column: 1 / 3;
  display: grid;
  grid-template-columns: 9fr auto 8fr;
  align-items: center;
  padding: 0 18px 0 18px;
  background: #131313;
  color: #f2f2f2;
}

.topbar-left,
.app-menu,
.clock,
.system {
  display: flex;
  align-items: center;
}

.topbar-left {
  gap: 38px;
}

.app-menu {
  gap: 7px;
}

.clock {
  gap: 17px;
}

.system {
  gap: 12px;
  justify-self: end;
}

/* dock */
.dock {
  display: flex;
  flex-direction: column;
  padding-top: 4px;
  background: linear-gradient(#180d15 60%, #26131f);
}

.dock button {
  position: relative;
  display: flex;
  align-items: center;
  justify-content: center;
  height: 64px;
  margin: 2px 3px;
  border-radius: 12px;
}

.dock button svg {
  width: 48px;
  height: 48px;
}

.dock .active {
  background: #443a42;
}

.dock .one::before,
.dock .two::before,
.dock .two::after {
  content: "";
  position: absolute;
  left: 0;
  top: 29px;
  width: 6px;
  height: 6px;
  border-radius: 50%;
  background: #e95420;
}

.dock .two::before {
  top: 25px;
}

.dock .two::after {
  top: 34px;
}

.dock hr {
  width: 48px;
  height: 1px;
  margin: 1px auto;
  border: none;
  background: #d8d4d7;
}

.dock .help span {
  position: absolute;
  font-size: 36px;
  line-height: 40px;
  color: #fff;
}

.dock .help svg {
  width: 44px;
  height: 44px;
}

.dock .apps {
  display: grid;
  grid-template-columns: repeat(3, 6px);
  grid-auto-rows: 6px;
  gap: 6px;
  align-items: stretch;
  place-content: center;
  margin-top: auto;
  margin-bottom: 6px;
}

.apps i {
  display: block;
  border-radius: 1px;
  background: #fff;
}

.c-writer { color: #2d86bf; }
.c-calc { color: #2b9a1c; }
.c-impress { color: #c4581f; }
.c-film { color: #dd5fce; }
.c-anim { color: #b648b4; }

/* window */
.window {
  display: flex;
  flex-direction: column;
  min-width: 0;
  background: #fafafa;
}

.titlebar {
  display: grid;
  grid-template-columns: 1fr auto 1fr;
  align-items: center;
  height: 37px;
  border-bottom: 1px solid #bdbdbd;
  background: #ebebeb;
}

.titlebar h1 {
  grid-column: 2;
  padding-top: 2px;
}

.win-buttons {
  display: flex;
  gap: 12px;
  justify-self: end;
  margin-right: 7px;
}

.win-buttons button {
  width: 22px;
  height: 22px;
  border-radius: 50%;
  background: #dadada;
}

.win-buttons svg {
  fill: none;
  stroke: #3d3d3d;
}

.menubar {
  display: flex;
  height: 25px;
  border-bottom: 1px solid #e0e0e0;
}

.menubar button {
  padding: 1px 8px 0;
}

.toolbars {
  padding-bottom: 2px;
}

.toolbar {
  display: flex;
  align-items: center;
  height: 39px;
  padding: 0 0 1px 3px;
}

.tb {
  display: flex;
  align-items: center;
  justify-content: center;
  width: 33px;
  height: 34px;
  border-radius: 6px;
}

.tb svg {
  width: 24px;
  height: 24px;
}

.tb.wide {
  width: 40px;
  margin-right: 3px;
}

.tb.wide svg {
  width: 28px;
}

.pressed {
  border: 1px solid #c2c2c2;
  background: #d6d6d6;
}

.arrow {
  width: 11px;
  padding: 1px 2px 0;
  color: #111;
}

.arrow svg {
  width: 7px;
  height: 4px;
}

.arrow:disabled {
  color: #b8b8b8;
}

.sep {
  width: 1px;
  height: 33px;
  margin: 0 3px;
  background: #dcdcdc;
}

.arrow + .sep {
  margin-left: 5px;
}

.sep.blank {
  background: none;
}

.gap {
  width: 2px;
}

.work {
  flex: 1;
  display: flex;
  min-height: 0;
}

.handle {
  position: absolute;
  top: 50%;
  z-index: 1;
  width: 7px;
  height: 73px;
  margin-top: -38px;
  padding: 0 1px;
  background: #999;
}

.handle svg {
  width: 5px;
  height: 8px;
}

/* slide pane */
.slides-panel {
  position: relative;
  display: flex;
  flex-direction: column;
  width: 196px;
  padding: 0 6px 5px 2px;
  border-right: 1px solid #b5b5b5;
}

.slides-panel .handle {
  right: -6px;
}

.panel-head {
  display: flex;
  align-items: center;
  justify-content: space-between;
  height: 34px;
  padding: 0 1px;
}

.panel-head svg {
  width: 11px;
  height: 11px;
}

.slide-list {
  flex: 1;
  display: flex;
  flex-direction: column;
  gap: 10px;
  margin: 0;
  padding: 8px;
  border-top: 1px solid #b5b5b5;
  border-left: 1px solid #b5b5b5;
  background: #fff;
  list-style: none;
}

.slide-list li {
  display: flex;
  justify-content: flex-end;
  gap: 5px;
  height: 89px;
  padding: 3px;
  border: 1px solid transparent;
  font-weight: 700;
  line-height: 14px;
  color: #808080;
}

.slide-list li button {
  width: 141px;
  height: 81px;
  border: 1px solid #6e6e6e;
  background: #fff;
  box-shadow: 0 1px 2px rgba(0, 0, 0, 0.4);
}

.slide-list .current {
  border-color: #a5675a;
  background: linear-gradient(#d09e8f, #e2b3a5);
  color: #4c4c4c;
}

/* editor */
.editor {
  flex: 1;
  display: grid;
  grid-template: minmax(0, 1fr) 13px / minmax(0, 1fr) 9px;
  min-width: 0;
}

.stage {
  display: flex;
  align-items: center;
  padding: 0 18px 0 22px;
}

.slide {
  flex: 1;
  aspect-ratio: 16 / 9;
  border: 2px solid #858585;
  background: #fff;
  box-shadow: 1px 1px 3px rgba(0, 0, 0, 0.3);
}

.scroll-y {
  display: flex;
  align-items: center;
}

.scroll-y div {
  width: 6px;
  height: 71%;
  border-radius: 2px;
  background: #888;
}

.scroll-x {
  display: flex;
  justify-content: center;
  padding-left: 6px;
}

.scroll-x div {
  width: 34%;
  height: 6px;
  margin-top: 4px;
  border-radius: 2px;
  background: #888;
}

/* sidebar */
.sidebar {
  position: relative;
  display: flex;
  width: 511px;
  padding-left: 8px;
  border-left: 1px solid #b5b5b5;
}

.sidebar > .handle {
  left: 0;
}

.deck {
  flex: 1;
}

.deck-head,
.section-head {
  display: flex;
  align-items: center;
}

.deck-head {
  gap: 7px;
  height: 24px;
  padding: 0 6px 0 1px;
}

.deck-head button,
.section-head button {
  margin-left: auto;
}

.grip {
  width: 8px;
  height: 13px;
}

.deck-head button svg {
  width: 10px;
  height: 10px;
}

.section-head {
  gap: 2px;
  height: 18px;
  padding: 0 3px 0 2px;
  background: #ebebeb;
}

.section-head svg {
  width: 12px;
  height: 12px;
}

.props {
  display: grid;
  grid-template-columns: 184px 158px;
  gap: 3px 7px;
  align-items: center;
  padding: 6px 0 7px;
}

.props label {
  text-align: right;
}

.props select,
.props button {
  grid-column: 2;
  height: 34px;
  border: 1px solid #c8c8c8;
  border-radius: 6px;
  background: #fff;
}

.props select {
  appearance: none;
  padding: 0 11px;
  background: #fff url("data:image/svg+xml,%3Csvg xmlns='http://www.w3.org/2000/svg' width='12' height='12'%3E%3Cpath d='M1 3.500L6 8l5-4.500' fill='none' stroke='%233d3d3d' stroke-width='1.300'/%3E%3C/svg%3E") no-repeat right 11px center;
}

.props .check {
  grid-column: 2;
  display: flex;
  align-items: center;
  gap: 4px;
  height: 22px;
  padding-left: 4px;
  white-space: nowrap;
}

.check input {
  appearance: none;
  flex: none;
  width: 16px;
  height: 16px;
  margin: 0;
  border-radius: 3px;
  background: #e95420 url("data:image/svg+xml,%3Csvg xmlns='http://www.w3.org/2000/svg' width='16' height='16'%3E%3Cpath d='M3 8l3.500 3.500L13 5' fill='none' stroke='white' stroke-width='2'/%3E%3C/svg%3E");
}

.layouts {
  display: grid;
  grid-template-columns: repeat(4, 1fr);
  grid-auto-rows: 66px;
}

.layout-cell {
  position: relative;
  display: flex;
  align-items: center;
  justify-content: center;
  padding-right: 2px;
}

.selected {
  outline: 1px solid #f0693c;
  outline-offset: -1px;
  z-index: 1;
}

.layout-cell button {
  width: 64px;
  height: 52px;
  border-radius: 9px;
  background: #e6e6e6;
  box-shadow: inset 0 0 0 1px #909090;
}

.layout-cell button svg {
  width: 64px;
  height: 52px;
  fill: #808080;
}

.layout-cell .t {
  fill: #8d5bd9;
}

.cursor {
  position: absolute;
  left: 56px;
  top: 38px;
  width: 18px;
  height: 27px;
}

.tooltip {
  position: absolute;
  left: 20px;
  top: 72px;
  width: 99px;
  padding: 13px 0 12px;
  border-radius: 4px;
  background: rgba(0, 0, 0, 0.8);
  color: #fff;
  text-align: center;
}

.tabs {
  display: flex;
  flex-direction: column;
  gap: 8px;
  width: 50px;
  padding: 1px 10px 0 4px;
}

.tabs button {
  display: flex;
  align-items: center;
  justify-content: center;
  height: 34px;
  border-radius: 5px;
}

.tabs svg {
  width: 24px;
  height: 24px;
}

.tab-menu {
  margin-bottom: 2px;
}

/* status bar */
.statusbar {
  display: flex;
  align-items: center;
  height: 21px;
  border-top: 1px solid #b5b5b5;
  font-size: 12px;
}

.statusbar > * {
  display: flex;
  align-items: center;
  height: 16px;
  border-right: 1px solid #dedede;
}

.st-slide {
  width: 76px;
  padding-left: 10px;
}

.st-master {
  flex: 1;
  padding-left: 515px;
}

.st-pos,
.st-size {
  gap: 4px;
}

.st-pos svg,
.st-size svg {
  width: 16px;
  height: 12px;
}

.st-pos {
  width: 105px;
  padding-left: 10px;
}

.statusbar .st-pos {
  border-right: none;
}

.st-size {
  width: 111px;
  padding-left: 9px;
}

.st-save {
  width: 22px;
  padding-left: 5px;
}

.st-save svg {
  width: 14px;
  height: 14px;
}

.st-sign {
  width: 29px;
}

.st-lang {
  width: 423px;
  padding-left: 157px;
}

.st-fit {
  width: 21px;
  padding: 0 3px;
}

.st-fit svg {
  width: 14px;
  height: 14px;
}

.st-zoom {
  gap: 6px;
  width: 144px;
  padding-left: 10px;
}

.st-zoom svg {
  width: 8px;
  height: 8px;
}

.st-zoom input {
  appearance: none;
  width: 96px;
  height: 12px;
  margin: 0;
  background: linear-gradient(#999, #999) center / 100% 2px no-repeat;
}

.st-zoom input::-webkit-slider-thumb {
  appearance: none;
  width: 8px;
  height: 8px;
  border: 1px solid #666;
  border-radius: 50%;
  background: #fff;
}

.st-percent {
  width: 47px;
  padding-left: 7px;
}

.statusbar .st-percent {
  border-right: none;
}
```
